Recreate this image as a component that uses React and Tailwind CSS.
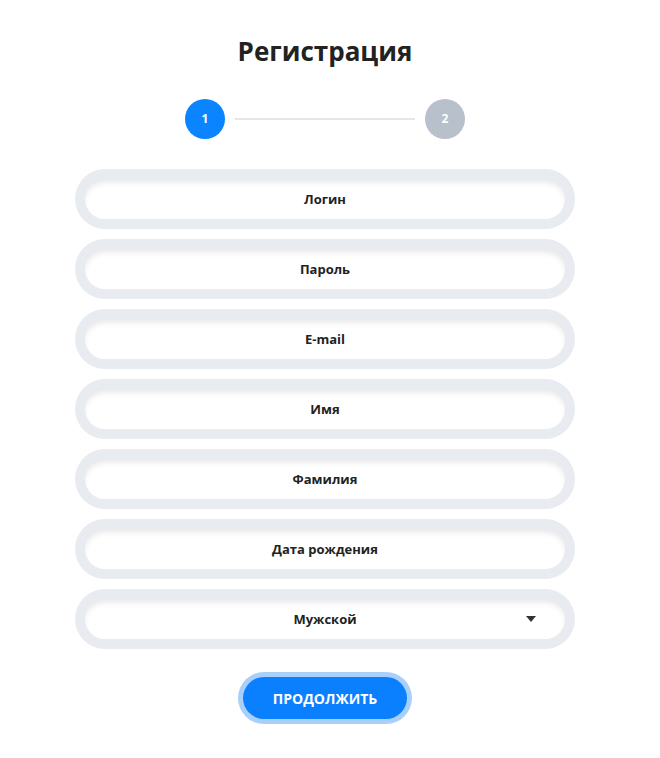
import React from 'react';

const fields = ['Логин', 'Пароль', 'E-mail', 'Имя', 'Фамилия', 'Дата рождения'];

const Field = ({ children }) => (
  <div className="h-[60px] w-[500px] rounded-full bg-[#e8ebf0] p-[10px]">
    <div className="relative flex h-full items-center justify-center rounded-full bg-white pt-[2px] shadow-[inset_0_5px_6px_-2px_rgba(0,0,0,0.1)] text-[13px] font-bold text-[#222]">
      {children}
    </div>
  </div>
);

const App = () => {
  return (
    <div className="min-h-[758px] w-[650px] bg-white" style={{ fontFamily: '"Open Sans", "Noto Sans", sans-serif' }}>
      <div className="flex flex-col items-center pt-[33px]">
        <h1 className="text-[26px] font-bold leading-[36px] text-[#222]">Регистрация</h1>

        <div className="mt-[30px] flex items-center">
          <div className="flex h-[40px] w-[40px] items-center justify-center rounded-full bg-[#0a84ff] text-[12px] font-bold text-white">1</div>
          <div className="mx-[10px] h-[2px] w-[180px] bg-[#e3e6eb]" />
          <div className="flex h-[40px] w-[40px] items-center justify-center rounded-full bg-[#b8c0cc] text-[12px] font-bold text-white">2</div>
        </div>

        <div className="mt-[30px] flex flex-col gap-[10px]">
          {fields.map((f) => (
            <Field key={f}>{f}</Field>
          ))}
          <Field>
            Мужской
            <svg className="absolute right-[29px] top-1/2 -translate-y-1/2" width="10" height="6" viewBox="0 0 10 6">
              <path d="M0 0 L10 0 L5 6 Z" fill="#333" />
            </svg>
          </Field>
        </div>

        <div className="mt-[23px] rounded-full bg-[#a9cffb] p-[5px]">
          <button className="h-[42px] w-[164px] rounded-full bg-[#0a80ff] text-[14px] font-bold text-white">
            ПРОДОЛЖИТЬ
          </button>
        </div>
      </div>
    </div>
  );
};

export default App;
